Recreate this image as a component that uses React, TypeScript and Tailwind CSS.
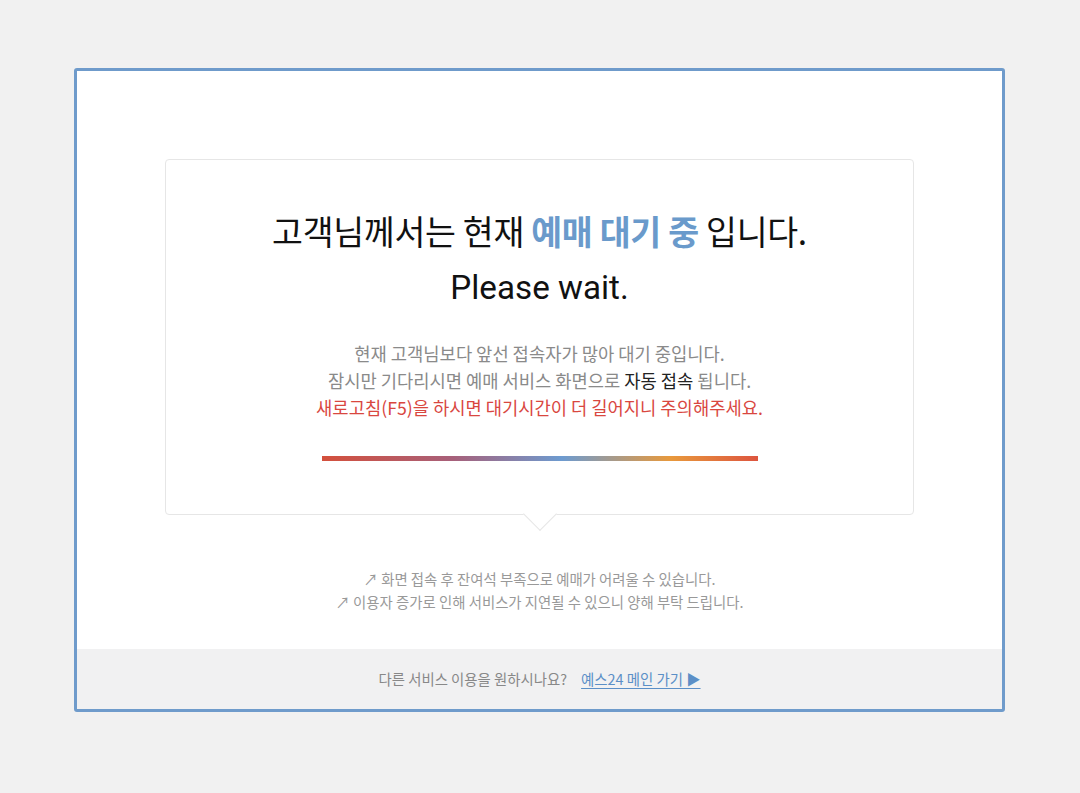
import React from "react";

const kr = { fontFamily: '"Noto Sans CJK KR", "Noto Sans", sans-serif' };
const en = { fontFamily: 'Roboto, "Noto Sans CJK KR", sans-serif' };

export default function App() {
  return (
    <div className="w-[1080px] h-[793px] bg-[#f1f1f1] pt-[68px] pl-[74px]" style={kr}>
      <div className="w-[931px] h-[644px] border-[3px] border-[#6f9bcb] rounded-[3px] bg-white flex flex-col">
        <div className="flex-1 pt-[88px] px-[88px]">
          <div className="relative h-[356px] border border-[#e6e6e6] rounded-[4px] bg-white flex flex-col items-center">
            <h1 className="mt-[48px] text-[33.6px] leading-[46px] text-[#111] tracking-[-0.3px] whitespace-nowrap">
              고객님께서는 현재 <span className="text-[#6a9acb] font-bold">예매 대기 중</span> 입니다.
            </h1>
            <p className="mt-[11px] text-[33.2px] leading-[46px] text-[#111]" style={en}>Please wait.</p>
            <div className="mt-[29px] text-[17.7px] leading-[27px] text-[#8a8a8a] text-center whitespace-nowrap">
              <p>현재 고객님보다 앞선 접속자가 많아 대기 중입니다.</p>
              <p>잠시만 기다리시면 예매 서비스 화면으로 <span className="text-[#222]">자동 접속</span> 됩니다.</p>
              <p className="text-[#d9473f]">새로고침(F5)을 하시면 대기시간이 더 길어지니 주의해주세요.</p>
            </div>
            <div className="mt-[35px] w-[436px] h-[5px] bg-[linear-gradient(90deg,#d4503c_0%,#a7607a_30%,#6d9bd0_55%,#e8993c_80%,#dd553f_100%)]" />
            <div className="absolute left-1/2 -bottom-[12px] -translate-x-1/2 w-[24px] h-[24px] rotate-45 bg-white border-r border-b border-[#e6e6e6]" />
          </div>
          <div className="mt-[52px] text-center text-[14.4px] leading-[23px] text-[#999] whitespace-nowrap">
            <p>↗ 화면 접속 후 잔여석 부족으로 예매가 어려울 수 있습니다.</p>
            <p>↗ 이용자 증가로 인해 서비스가 지연될 수 있으니 양해 부탁 드립니다.</p>
          </div>
        </div>
        <div className="h-[60px] bg-[#f1f1f2] flex items-center justify-center text-[14.4px] text-[#888]">
          <span>다른 서비스 이용을 원하시나요?</span>
          <a href="#" className="ml-[14px] text-[#5b8fc7] underline underline-offset-[3px]">예스24 메인 가기 ▶</a>
        </div>
      </div>
    </div>
  );
}
